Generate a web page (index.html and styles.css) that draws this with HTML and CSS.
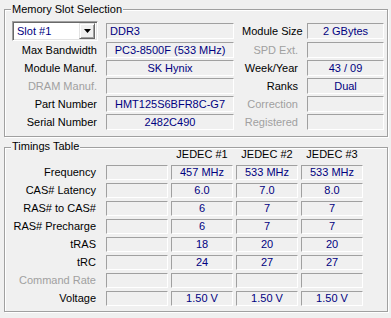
FILE: index.html
```html
<!DOCTYPE html>
<html>
<head>
<meta charset="utf-8">
<link rel="stylesheet" href="styles.css">
</head>
<body>
<section class="group group-slot">
  <span class="legend">Memory Slot Selection</span>
  <div class="slot-grid">
    <div class="combo">
      <span class="combo-text">Slot #1</span>
      <span class="combo-btn"><svg width="7" height="4" viewBox="0 0 7 4"><path d="M0 0H7L3.5 4Z" fill="#000"/></svg></span>
    </div>
    <div class="field left">DDR3</div>
    <div class="label">Module Size</div>
    <div class="field">2 GBytes</div>

    <div class="label">Max Bandwidth</div>
    <div class="field">PC3-8500F (533 MHz)</div>
    <div class="label dis">SPD Ext.</div>
    <div class="field"></div>

    <div class="label">Module Manuf.</div>
    <div class="field">SK Hynix</div>
    <div class="label">Week/Year</div>
    <div class="field">43 / 09</div>

    <div class="label dis">DRAM Manuf.</div>
    <div class="field"></div>
    <div class="label">Ranks</div>
    <div class="field">Dual</div>

    <div class="label">Part Number</div>
    <div class="field">HMT125S6BFR8C-G7</div>
    <div class="label dis">Correction</div>
    <div class="field"></div>

    <div class="label">Serial Number</div>
    <div class="field">2482C490</div>
    <div class="label dis">Registered</div>
    <div class="field"></div>
  </div>
</section>

<section class="group group-timings">
  <span class="legend">Timings Table</span>
  <div class="tim-grid">
    <div></div><div></div>
    <div class="head">JEDEC #1</div>
    <div class="head">JEDEC #2</div>
    <div class="head">JEDEC #3</div>

    <div class="label">Frequency</div>
    <div class="field"></div><div class="field">457 MHz</div><div class="field">533 MHz</div><div class="field">533 MHz</div>

    <div class="label">CAS# Latency</div>
    <div class="field"></div><div class="field">6.0</div><div class="field">7.0</div><div class="field">8.0</div>

    <div class="label">RAS# to CAS#</div>
    <div class="field"></div><div class="field">6</div><div class="field">7</div><div class="field">7</div>

    <div class="label">RAS# Precharge</div>
    <div class="field"></div><div class="field">6</div><div class="field">7</div><div class="field">7</div>

    <div class="label">tRAS</div>
    <div class="field"></div><div class="field">18</div><div class="field">20</div><div class="field">20</div>

    <div class="label">tRC</div>
    <div class="field"></div><div class="field">24</div><div class="field">27</div><div class="field">27</div>

    <div class="label dis">Command Rate</div>
    <div class="field"></div><div class="field"></div><div class="field"></div><div class="field"></div>

    <div class="label">Voltage</div>
    <div class="field"></div><div class="field">1.50 V</div><div class="field">1.50 V</div><div class="field">1.50 V</div>
  </div>
</section>
</body>
</html>
```

FILE: styles.css
```css
html, body {
  margin: 0;
  padding: 0;
  background: #f0f0f0;
}
body {
  font-family: "Liberation Sans", Arial, sans-serif;
  font-size: 11px;
  color: #000;
  width: 391px;
  height: 318px;
  overflow: hidden;
  padding-top: 9px;
  box-sizing: border-box;
}
.group {
  position: relative;
  margin: 0 3px 0 4px;
  border: 1px solid #a0a0a0;
  box-shadow: inset 1px 1px 0 #fff, 1px 1px 0 #fff;
}
.legend {
  position: absolute;
  left: 6px;
  top: -7px;
  padding: 0 1px;
  line-height: 13px;
  background: #f0f0f0;
  white-space: nowrap;
}
.group-slot {
  padding: 11px 3px 5px 7px;
}
.group-timings {
  margin-top: 10px;
  padding: 0 3px 5px 7px;
}
.group-timings .legend {
  top: -8px;
}
.slot-grid {
  display: grid;
  grid-template-columns: 86px 128px 57px 77px;
  grid-template-rows: 20px repeat(5, 18px);
  column-gap: 8px;
  align-items: center;
}
.label {
  text-align: right;
  white-space: nowrap;
  line-height: 18px;
  padding-right: 1px;
}
.dis {
  color: #a0a0a0;
}
.field {
  height: 16px;
  box-sizing: border-box;
  border: 1px solid;
  border-color: #a0a0a0 #fff #fff #a0a0a0;
  color: #000080;
  text-align: center;
  line-height: 14px;
  white-space: nowrap;
  overflow: hidden;
}
.field.left {
  text-align: left;
  padding-left: 3px;
}
.combo {
  height: 20px;
  box-sizing: border-box;
  border: 1px solid;
  border-color: #a0a0a0 #fff #fff #a0a0a0;
  box-shadow: inset 1px 1px 0 #696969, inset -1px -1px 0 #e3e3e3;
  background: #fff;
  display: flex;
  align-items: center;
  justify-content: space-between;
  padding: 2px;
}
.combo-text {
  color: #000080;
  padding-left: 2px;
  line-height: 14px;
}
.combo-btn {
  width: 16px;
  height: 16px;
  box-sizing: border-box;
  background: #f0f0f0;
  border: 1px solid;
  border-color: #e3e3e3 #696969 #696969 #e3e3e3;
  box-shadow: inset 1px 1px 0 #fff, inset -1px -1px 0 #a0a0a0;
  display: flex;
  align-items: center;
  justify-content: center;
}
.combo-btn svg {
  display: block;
}
.tim-grid {
  display: grid;
  grid-template-columns: 91px repeat(4, 62px);
  grid-template-rows: 14px repeat(8, 15px);
  column-gap: 3px;
  row-gap: 3px;
  align-items: center;
}
.tim-grid .head {
  text-align: center;
  line-height: 13px;
  align-self: start;
  margin-top: 0;
}
.tim-grid > :nth-child(-n+5) {
  margin-bottom: -3px;
}
.tim-grid .label {
  padding-right: 7px;
  line-height: 15px;
}
.tim-grid .field {
  height: 15px;
  line-height: 13px;
}
```
